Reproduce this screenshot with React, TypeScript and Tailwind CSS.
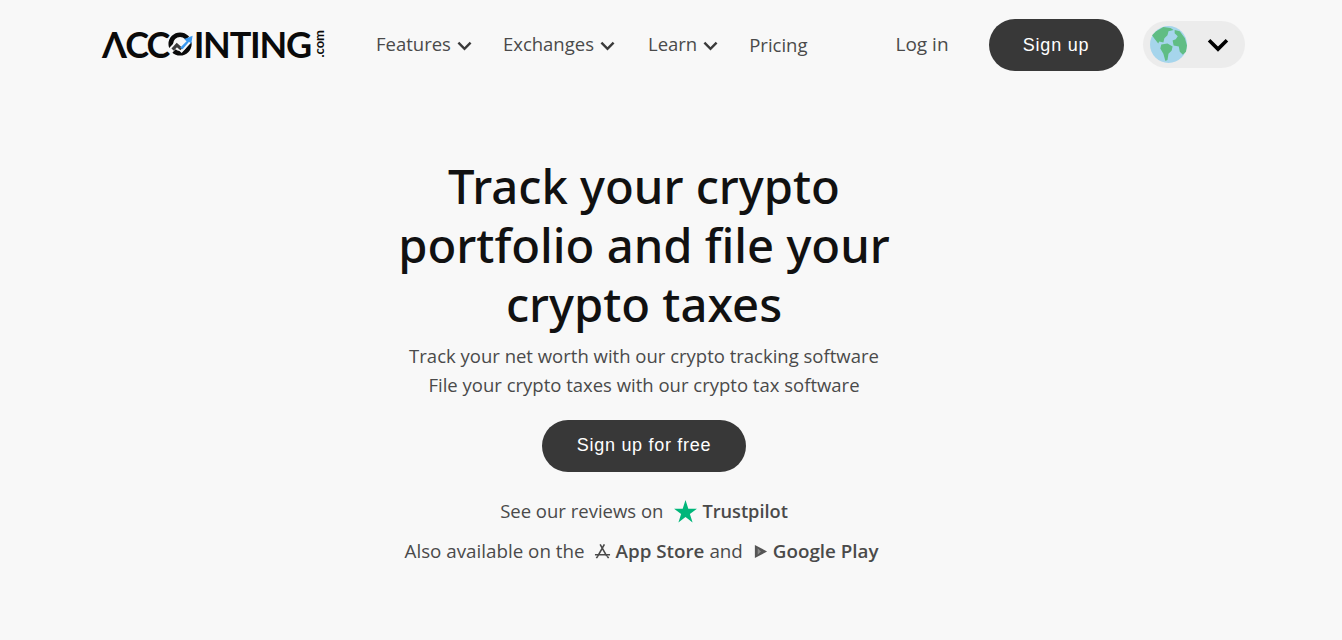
const navItems = [
  { label: "Features", gap: "mr-[31px]" },
  { label: "Exchanges", gap: "mr-[33px]" },
  { label: "Learn", gap: "mr-[31px]" },
];

function Chevron({ className }: { className: string }) {
  return (
    <svg viewBox="0 0 16 10" fill="none" stroke="currentColor" strokeWidth="2.6" className={className}>
      <path d="M1.500 1.500 8 8l6.500-6.500" />
    </svg>
  );
}

function Logo() {
  return (
    <a className="-mt-[2px] flex h-[30px] w-[223px] items-center text-[#0a0a0a] font-['Lato',sans-serif] text-[36px] font-bold leading-none">
      <span className="tracking-[-1.8px]">ΛCC</span>
      <svg viewBox="0 0 28 28" className="-ml-[1px] h-[28px] w-[26px] shrink-0">
        <circle cx="13" cy="14" r="10" fill="none" stroke="#0a0a0a" strokeWidth="5" />
        <path d="M2 22 9 14.500l5.500 5L25 8" fill="none" stroke="#f8f8f8" strokeWidth="6" />
        <path d="M5 20l4.500-5 5 4.500" fill="none" stroke="#3d3d3d" strokeWidth="3.500" />
        <path d="M13 18l7-7-2.500-2.500L26.500 5l-1.500 9-2.300-2.300-7 8z" fill="#3b99f0" />
      </svg>
      <span className="tracking-[-1.2px]">INTING</span>
      <span className="ml-[2px] rotate-180 text-[13px] font-bold [writing-mode:vertical-rl]">.com</span>
    </a>
  );
}

function Globe() {
  return (
    <svg viewBox="0 0 36 36" className="h-[37px] w-[37px] shrink-0">
      <circle cx="18" cy="18" r="18" fill="#a6d5ec" />
      <path d="M6 5 13 1l7 1 3 2-5 1-1 4-3 3-1 4-4-1-1 2-4-5-2-3z" fill="#60bd84" />
      <path d="M11 18l6-1 5 3-1 4-3 3-1 6-2 1-2-7-3-5z" fill="#60bd84" />
      <path d="M24 4l5 1 5 7 2 7-1 6-3 3-3-3-1-5-5-1-1-5 3-1 2-3-3-3z" fill="#60bd84" />
    </svg>
  );
}

export default function App() {
  return (
    <div className="h-[640px] overflow-hidden bg-[#f8f8f8] font-['Open_Sans',sans-serif] text-[#4a4a4a]">
      <header className="flex h-[90px] items-center pl-[102px]">
        <Logo />
        <nav className="ml-[51px] flex items-center text-[18.5px]">
          {navItems.map((item) => (
            <a key={item.label} className={`-mt-[2px] flex items-center gap-[6px] ${item.gap}`}>
              {item.label}
              <Chevron className="mt-[3px] h-[10px] w-[15px] text-[#3a3a3a]" />
            </a>
          ))}
          <a>Pricing</a>
        </nav>
        <a className="ml-[88px] -mt-[1px] text-[19px]">Log in</a>
        <a className="ml-[40px] flex h-[52px] w-[135px] items-center justify-center rounded-[26px] bg-[#383838] font-['Liberation_Sans',sans-serif] text-[18px] tracking-[0.8px] text-white">
          Sign up
        </a>
        <button className="ml-[19px] -mt-[1px] flex h-[47px] w-[102px] items-center rounded-[24px] bg-[#ececec] pl-[7px] text-black">
          <Globe />
          <Chevron className="ml-[20px] h-[14px] w-[22px]" />
        </button>
      </header>
      <main className="mr-[54px] flex flex-col items-center pt-[67px] text-center">
        <h1 className="w-[540px] font-['Noto_Sans',sans-serif] text-[47.2px] leading-[59px] font-medium text-[#111111]">
          Track your crypto portfolio and file your crypto taxes
        </h1>
        <p className="mt-[7px] text-[18.5px] leading-[29px]">
          Track your net worth with our crypto tracking software
          <br />
          File your crypto taxes with our crypto tax software
        </p>
        <a className="mt-[21px] flex h-[52px] w-[204px] items-center justify-center rounded-[26px] bg-[#383838] pb-[2px] font-['Liberation_Sans',sans-serif] text-[18px] tracking-[0.7px] text-white">
          Sign up for free
        </a>
        <div className="mt-[25px] flex items-center text-[18.5px] leading-[28px]">
          See our reviews on
          <svg viewBox="0 0 24 24" className="ml-[10px] mr-[4px] h-[25px] w-[25px] fill-[#00b67a]">
            <path d="M12 1l2.700 8.300H23l-6.800 5 2.600 8.200L12 17.400 5.200 22.500l2.600-8.200-6.800-5h8.300z" />
          </svg>
          <span className="text-[18.2px] font-semibold">Trustpilot</span>
        </div>
        <div className="mt-[12px] mr-[5px] flex items-center text-[18.8px] leading-[28px]">
          Also available on the
          <svg viewBox="0 0 18 18" fill="none" stroke="#4a4a4a" strokeWidth="1.700" className="ml-[9px] mr-[5px] h-[17px] w-[17px]">
            <path d="M6.500 1.500 13.500 14M11 1.500 4 14M1 12.500h16M2.500 16l1.500-2M15.500 16 14 14" />
          </svg>
          <span className="font-semibold">App Store</span>
          <span className="ml-[5px]">and</span>
          <svg viewBox="0 0 16 16" className="ml-[10px] mr-[5px] h-[15px] w-[15px] fill-[#555555]">
            <path d="M2 1l13 7-13 7z" />
            <path d="M5 4.500 8.500 8 5 11.500z" fill="#8a8a8a" />
          </svg>
          <span className="font-semibold">Google Play</span>
        </div>
      </main>
    </div>
  );
}
